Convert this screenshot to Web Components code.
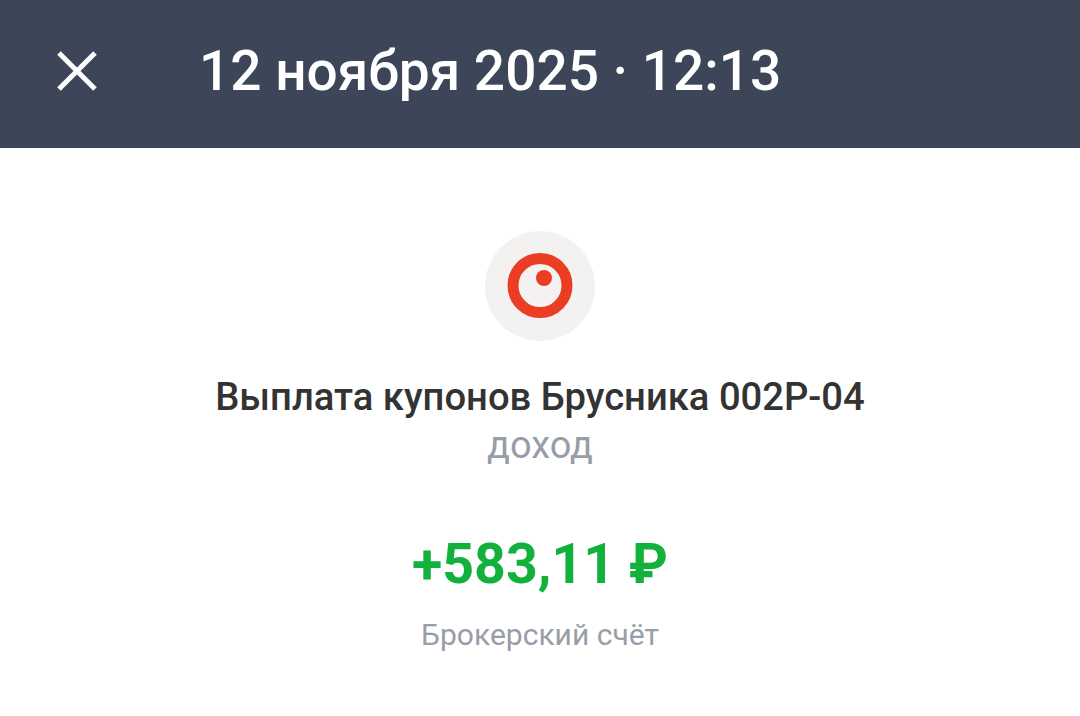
<!DOCTYPE html>
<html>
<head>
<meta charset="utf-8">
<style>
  html, body { margin: 0; height: 100%; background: #fff; overflow: hidden; }
  body { font-family: Roboto, "Noto Sans", sans-serif; }
</style>
</head>
<body>
<op-screen>
  <op-header>12 ноября 2025 · 12:13</op-header>
  <op-details amount="+583,11 ₽" account="Брокерский счёт" kind="доход">
    Выплата купонов Брусника 002Р-04
  </op-details>
</op-screen>

<script>
class OpScreen extends HTMLElement {
  constructor() {
    super();
    this.attachShadow({ mode: "open" });
    this.shadowRoot.innerHTML = `
      <style>
        :host { display: flex; flex-direction: column; width: 1080px; height: 716px; }
      </style>
      <slot></slot>`;
  }
}

class OpHeader extends HTMLElement {
  constructor() {
    super();
    this.attachShadow({ mode: "open" });
    this.shadowRoot.innerHTML = `
      <style>
        :host {
          display: flex;
          align-items: center;
          height: 148px;
          box-sizing: border-box;
          padding: 0 0 6px 57px;
          background: #3c4658;
          color: #fff;
          font-size: 55px;
          font-weight: 500;
        }
        svg { width: 40px; height: 40px; margin-right: 102px; flex: none; }
      </style>
      <svg viewBox="0 0 40 40" fill="none" stroke="#fff" stroke-width="5">
        <path d="M2 2 L38 38 M38 2 L2 38"/>
      </svg>
      <slot></slot>`;
  }
}

class OpLogo extends HTMLElement {
  constructor() {
    super();
    this.attachShadow({ mode: "open" });
    this.shadowRoot.innerHTML = `
      <style>
        :host {
          display: flex;
          align-items: center;
          justify-content: center;
          width: 110px;
          height: 110px;
          border-radius: 50%;
          background: #f3f2f1;
        }
        svg { width: 66px; height: 66px; }
      </style>
      <svg viewBox="0 0 66 66">
        <circle cx="33" cy="32.5" r="27" fill="none" stroke="#ea3d23" stroke-width="11"/>
        <circle cx="37" cy="25" r="8" fill="#ea3d23"/>
      </svg>`;
  }
}

class OpDetails extends HTMLElement {
  constructor() {
    super();
    this.attachShadow({ mode: "open" });
    this.shadowRoot.innerHTML = `
      <style>
        :host {
          display: flex;
          flex-direction: column;
          align-items: center;
          padding-top: 83px;
        }
        .title { margin-top: 34px; font-size: 38.2px; line-height: 44px; font-weight: 500; color: #333; }
        .kind { margin-top: 6px; font-size: 38px; line-height: 40px; color: #989ea7; }
        .amount { margin-top: 68px; font-size: 55.5px; line-height: 64px; font-weight: 700; color: #12b13c; }
        .account { margin-top: 21px; font-size: 30px; line-height: 34px; color: #989ea7; }
      </style>
      <op-logo></op-logo>
      <div class="title"><slot></slot></div>
      <div class="kind"></div>
      <div class="amount"></div>
      <div class="account"></div>`;
    this.shadowRoot.querySelector(".kind").textContent = this.getAttribute("kind");
    this.shadowRoot.querySelector(".amount").textContent = this.getAttribute("amount");
    this.shadowRoot.querySelector(".account").textContent = this.getAttribute("account");
  }
}

customElements.define("op-screen", OpScreen);
customElements.define("op-header", OpHeader);
customElements.define("op-logo", OpLogo);
customElements.define("op-details", OpDetails);
</script>
</body>
</html>
